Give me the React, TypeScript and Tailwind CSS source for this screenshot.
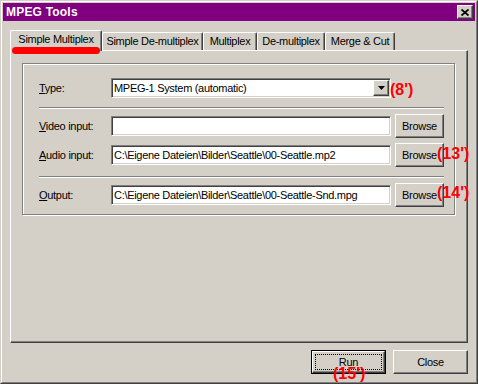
import React from "react";

const raised =
  "border border-t-white border-l-white border-r-[#404040] border-b-[#404040] shadow-[inset_-1px_-1px_0_#808080]";
const sunken =
  "border border-t-[#808080] border-l-[#808080] border-r-white border-b-white shadow-[inset_1px_1px_0_#404040,inset_-1px_-1px_0_#d4d0c8]";

// red marker notes drawn over the dialog
function Note({ text, className }: { text: string; className: string }) {
  return (
    <span
      className={`absolute text-[16px] leading-[16px] tracking-normal font-bold text-[#ff0000] whitespace-nowrap ${className}`}
    >
      {text}
    </span>
  );
}

function Label({ k, rest }: { k: string; rest: string }) {
  return (
    <div className="w-[72px] leading-[13px]">
      <span className="underline underline-offset-1">{k}</span>
      {rest}
    </div>
  );
}

function Field({ value }: { value: string }) {
  return (
    <div
      className={`w-[280px] h-[20px] bg-white ${sunken} flex items-center pl-[2px] whitespace-nowrap overflow-hidden`}
    >
      {value}
    </div>
  );
}

function Browse() {
  return (
    <div
      className={`ml-[4px] w-[49px] h-[24px] ${raised} flex items-center justify-center`}
    >
      Browse
    </div>
  );
}

function Sep() {
  return (
    <div className="ml-4 w-[405px] h-0 border-t border-t-[#808080] border-b border-b-white" />
  );
}

function Tab({
  label,
  w,
  active,
}: {
  label: string;
  w: string;
  active?: boolean;
}) {
  if (active) {
    return (
      <div
        className={`relative z-10 ${w} h-[21px] -mb-px bg-[#d4d0c8] border-t border-l border-r border-t-white border-l-white border-r-[#404040] rounded-tl-[2px] rounded-tr-[2px] shadow-[inset_-1px_0_0_#808080] flex items-start justify-center pt-[2px] leading-[13px]`}
      >
        {label}
      </div>
    );
  }
  return (
    <div
      className={`${w} h-[18px] border-t border-l border-r border-t-white border-l-white border-r-[#404040] rounded-tl-[2px] rounded-tr-[2px] shadow-[inset_-1px_0_0_#808080] flex items-start justify-center pt-[2px] leading-[13px]`}
    >
      {label}
    </div>
  );
}

export default function App() {
  return (
    <div className="w-[478px] h-[384px] bg-[#d4d0c8] text-black text-[11px] tracking-[-0.3px] font-['Liberation_Sans',Arial,sans-serif] border border-t-[#d4d0c8] border-l-[#d4d0c8] border-r-[#404040] border-b-[#404040] overflow-hidden">
      <div className="h-full border border-t-white border-l-white border-r-[#808080] border-b-[#808080] p-px flex flex-col">
        {/* Title bar */}
        <div className="h-[18px] bg-[#800080] flex items-center justify-between pl-[3px] pr-[2px]">
          <span className="text-white text-[12px] font-bold tracking-[0.2px]">
            MPEG Tools
          </span>
          <div
            className={`w-[16px] h-[14px] bg-[#d4d0c8] ${raised} flex items-center justify-center`}
          >
            <svg width="8" height="7" viewBox="0 0 8 7">
              <path
                d="M0.5 0.5 L7.5 6.5 M7.5 0.5 L0.5 6.5"
                stroke="#000"
                strokeWidth="1.8"
              />
            </svg>
          </div>
        </div>

        {/* Tabs + panel */}
        <div className="mt-[9px] px-[7px]">
          <div className="relative flex items-end h-[20px]">
            <Tab label="Simple Multiplex" w="w-[92px]" active />
            <Tab label="Simple De-multiplex" w="w-[101px]" />
            <Tab label="Multiplex" w="w-[54px]" />
            <Tab label="De-multiplex" w="w-[68px]" />
            <Tab label="Merge & Cut" w="w-[70px]" />
            <div className="absolute z-20 left-[2px] top-[17px] w-[88px] h-[7px] rounded-full bg-[#ff0000]" />
          </div>
          <div className={`h-[293px] ${raised} pt-[12px] pl-[11px]`}>
            <div className="w-[433px] border border-[#808080] shadow-[inset_1px_1px_0_#fff,1px_1px_0_#fff] pt-[14px] pb-[7px]">
              <div className="relative flex items-center pl-4 h-[20px]">
                <Label k="T" rest="ype:" />
                <div
                  className={`w-[280px] h-[20px] bg-white ${sunken} flex items-center justify-between pl-[2px] pr-[1px]`}
                >
                  <span>MPEG-1 System (automatic)</span>
                  <div
                    className={`w-[16px] h-[16px] bg-[#d4d0c8] ${raised} flex items-center justify-center`}
                  >
                    <svg width="7" height="4" viewBox="0 0 7 4">
                      <path d="M0 0 H7 L3.5 4 Z" fill="#000" />
                    </svg>
                  </div>
                </div>
                <Note text="(8')" className="left-[367px] top-[4px]" />
              </div>

              <div className="mt-[9px]">
                <Sep />
              </div>

              <div className="relative flex items-center pl-4 h-[24px] mt-[5px]">
                <Label k="V" rest="ideo input:" />
                <Field value="" />
                <Browse />
              </div>

              <div className="relative flex items-center pl-4 h-[24px] mt-[5px]">
                <Label k="A" rest="udio input:" />
                <Field value="C:\Eigene Dateien\Bilder\Seattle\00-Seattle.mp2" />
                <Browse />
                <Note text="(13')" className="left-[414px] top-[3px]" />
              </div>

              <div className="mt-[9px]">
                <Sep />
              </div>

              <div className="relative flex items-center pl-4 h-[24px] mt-[5px]">
                <Label k="O" rest="utput:" />
                <Field value="C:\Eigene Dateien\Bilder\Seattle\00-Seattle-Snd.mpg" />
                <Browse />
                <Note text="(14')" className="left-[414px] top-[2px]" />
              </div>
            </div>
          </div>
        </div>

        {/* Bottom buttons */}
        <div className="mt-[7px] flex justify-end gap-[7px] pr-[7px]">
          <div className="relative w-[75px] h-[24px] border border-black">
            <div className={`h-full ${raised} p-[2px]`}>
              <div className="h-full border border-dotted border-black flex items-center justify-center">
                Run
              </div>
            </div>
            <Note text="(15')" className="left-[21px] top-[15px]" />
          </div>
          <div
            className={`w-[75px] h-[24px] ${raised} flex items-center justify-center`}
          >
            Close
          </div>
        </div>
      </div>
    </div>
  );
}
